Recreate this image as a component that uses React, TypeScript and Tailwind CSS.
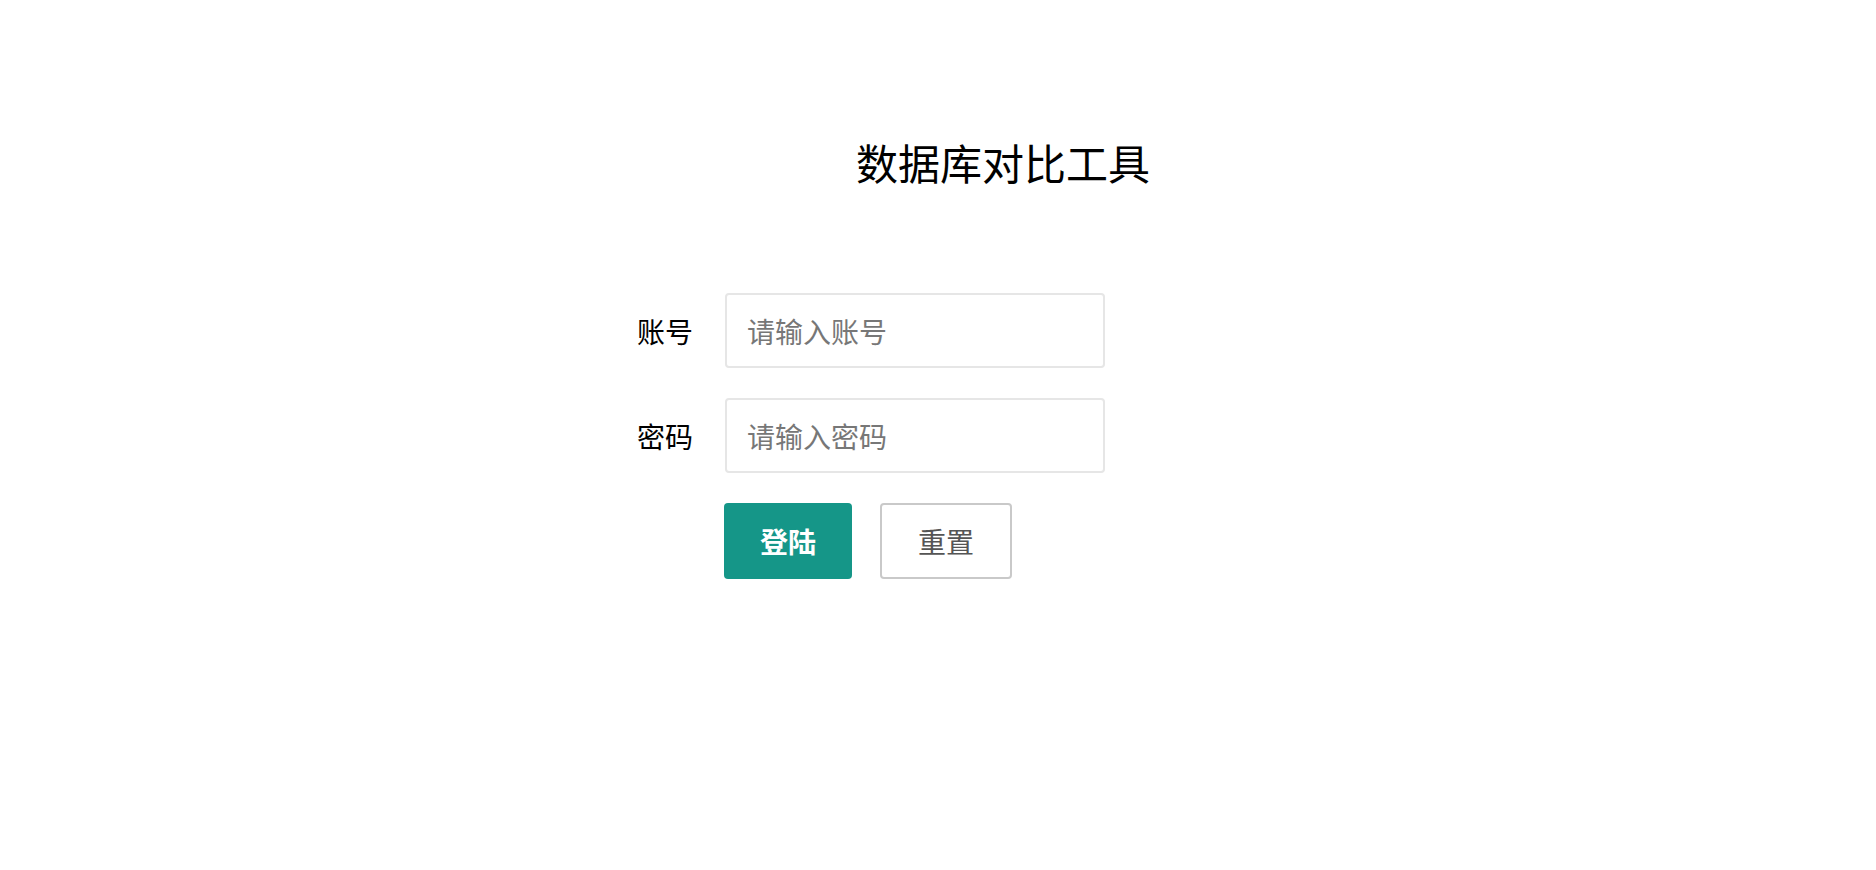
import { useState } from 'react'

export default function App() {
  const [account, setAccount] = useState('')
  const [password, setPassword] = useState('')

  return (
    <div
      className="min-h-[870px] w-full bg-white pt-[141px]"
      style={{ fontFamily: '"Noto Sans CJK SC", "Noto Sans", sans-serif' }}
    >
      <div className="pl-[565px]">
        <div className="flex w-[876px] justify-center">
          <h1 className="text-[42px] leading-[42px] font-normal text-black">数据库对比工具</h1>
        </div>

        <form
          className="mt-[110px] flex flex-col gap-[30px]"
          onSubmit={(e) => e.preventDefault()}
        >
          <div className="flex items-center">
            <label className="w-[160px] pr-[32px] text-right text-[28px] leading-[28px] text-black">账号</label>
            <input
              value={account}
              onChange={(e) => setAccount(e.target.value)}
              placeholder="请输入账号"
              className="h-[75px] w-[380px] rounded-[4px] border-2 border-[#e6e6e6] px-[20px] text-[28px] text-[#333] outline-none placeholder:text-[#777]"
            />
          </div>

          <div className="flex items-center">
            <label className="w-[160px] pr-[32px] text-right text-[28px] leading-[28px] text-black">密码</label>
            <input
              type="password"
              value={password}
              onChange={(e) => setPassword(e.target.value)}
              placeholder="请输入密码"
              className="h-[75px] w-[380px] rounded-[4px] border-2 border-[#e6e6e6] px-[20px] text-[28px] text-[#333] outline-none placeholder:text-[#777]"
            />
          </div>

          <div className="flex items-center gap-[28px] pl-[159px]">
            <button
              type="submit"
              className="h-[76px] w-[128px] rounded-[4px] bg-[#159688] text-[28px] font-bold text-white"
            >
              登陆
            </button>
            <button
              type="button"
              onClick={() => {
                setAccount('')
                setPassword('')
              }}
              className="h-[76px] w-[132px] rounded-[4px] border-2 border-[#c9c9c9] bg-white text-[28px] text-[#555]"
            >
              重置
            </button>
          </div>
        </form>
      </div>
    </div>
  )
}
